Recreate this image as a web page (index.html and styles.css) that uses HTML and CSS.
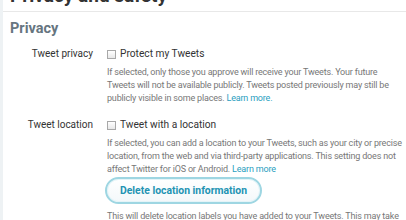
FILE: index.html
```html
<!DOCTYPE html>
<html lang="en">
<head>
<meta charset="UTF-8" />
<title>Privacy and safety</title>
<link rel="stylesheet" href="styles.css">
</head>
<body>
<div class="page">
  <header class="page-head">Privacy and safety</header>

  <section class="group">
    <h2>Privacy</h2>

    <div class="row">
      <div class="label">Tweet privacy</div>
      <div class="control">
        <label class="check"><span class="box"></span>Protect my Tweets</label>
        <p class="help">If selected, only those you approve will receive your Tweets. Your future<br>
          Tweets will not be available publicly. Tweets posted previously may still be<br>
          publicly visible in some places. <a href="#">Learn more.</a></p>
      </div>
    </div>

    <div class="row">
      <div class="label">Tweet location</div>
      <div class="control">
        <label class="check"><span class="box"></span>Tweet with a location</label>
        <p class="help">If selected, you can add a location to your Tweets, such as your city or precise<br>
          location, from the web and via third-party applications. This setting does not<br>
          affect Twitter for iOS or Android. <a href="#">Learn more</a></p>
        <button class="pill">Delete location information</button>
        <p class="help">This will delete location labels you have added to your Tweets. This may take<br>
          up to 30 minutes.</p>
      </div>
    </div>
  </section>
</div>
</body>
</html>
```

FILE: styles.css
```css
* {
  box-sizing: border-box;
  margin: 0; padding: 0;
}
body {
  font-family: Roboto, 'Open Sans', sans-serif;
  background: #fff;
  color: #333;
  overflow: hidden;
}
.page {
  border-left: 3px solid #eef2f4;
  min-height: 100vh;
}
.page-head {
  margin-top: -14px;
  padding: 0 7px 5px;
  font-size: 19px;
  font-weight: 700;
  line-height: 20px;
  color: #333;
  border-bottom: 1px solid #e8e8e8;
}
.group {
  padding: 6px 7px 0;
}
.group h2 {
  font-size: 14.5px;
  font-weight: 700;
  color: #66757f;
  line-height: 22px;
  margin-bottom: 6px;
}
.row {
  display: grid;
  grid-template-columns: 83px 1fr;
  column-gap: 14px;
  margin-bottom: 12px;
}
.label {
  text-align: right;
  font-size: 10px;
  line-height: 16px;
  color: #333;
}
.check {
  display: flex;
  align-items: center;
  gap: 4px;
  font-size: 10.2px;
  line-height: 16px;
  color: #333;
}
.box {
  width: 9px;
  height: 9px;
  border: 1px solid #a8a8a8;
  background: linear-gradient(#fff, #e8e8e8);
}
.help {
  font-size: 9px;
  line-height: 13px;
  letter-spacing: -0.18px;
  color: #777;
  margin-top: 4px;
  white-space: nowrap;
}
.help a {
  color: #2a9ec0;
  text-decoration: none;
}
.pill {
  display: block;
  margin: 1px 0 6px -2px;
  height: 27px;
  padding: 0 13px;
  border-radius: 14px;
  border: 2px solid #9ed6e2;
  box-shadow: inset 0 0 0 1px #e4f4f8;
  background: linear-gradient(#fff, #f3f8fa);
  font-family: inherit;
  font-size: 10.4px;
  font-weight: 700;
  color: #2293b3;
}
.pill + .help {
  margin-top: 0;
}
```
